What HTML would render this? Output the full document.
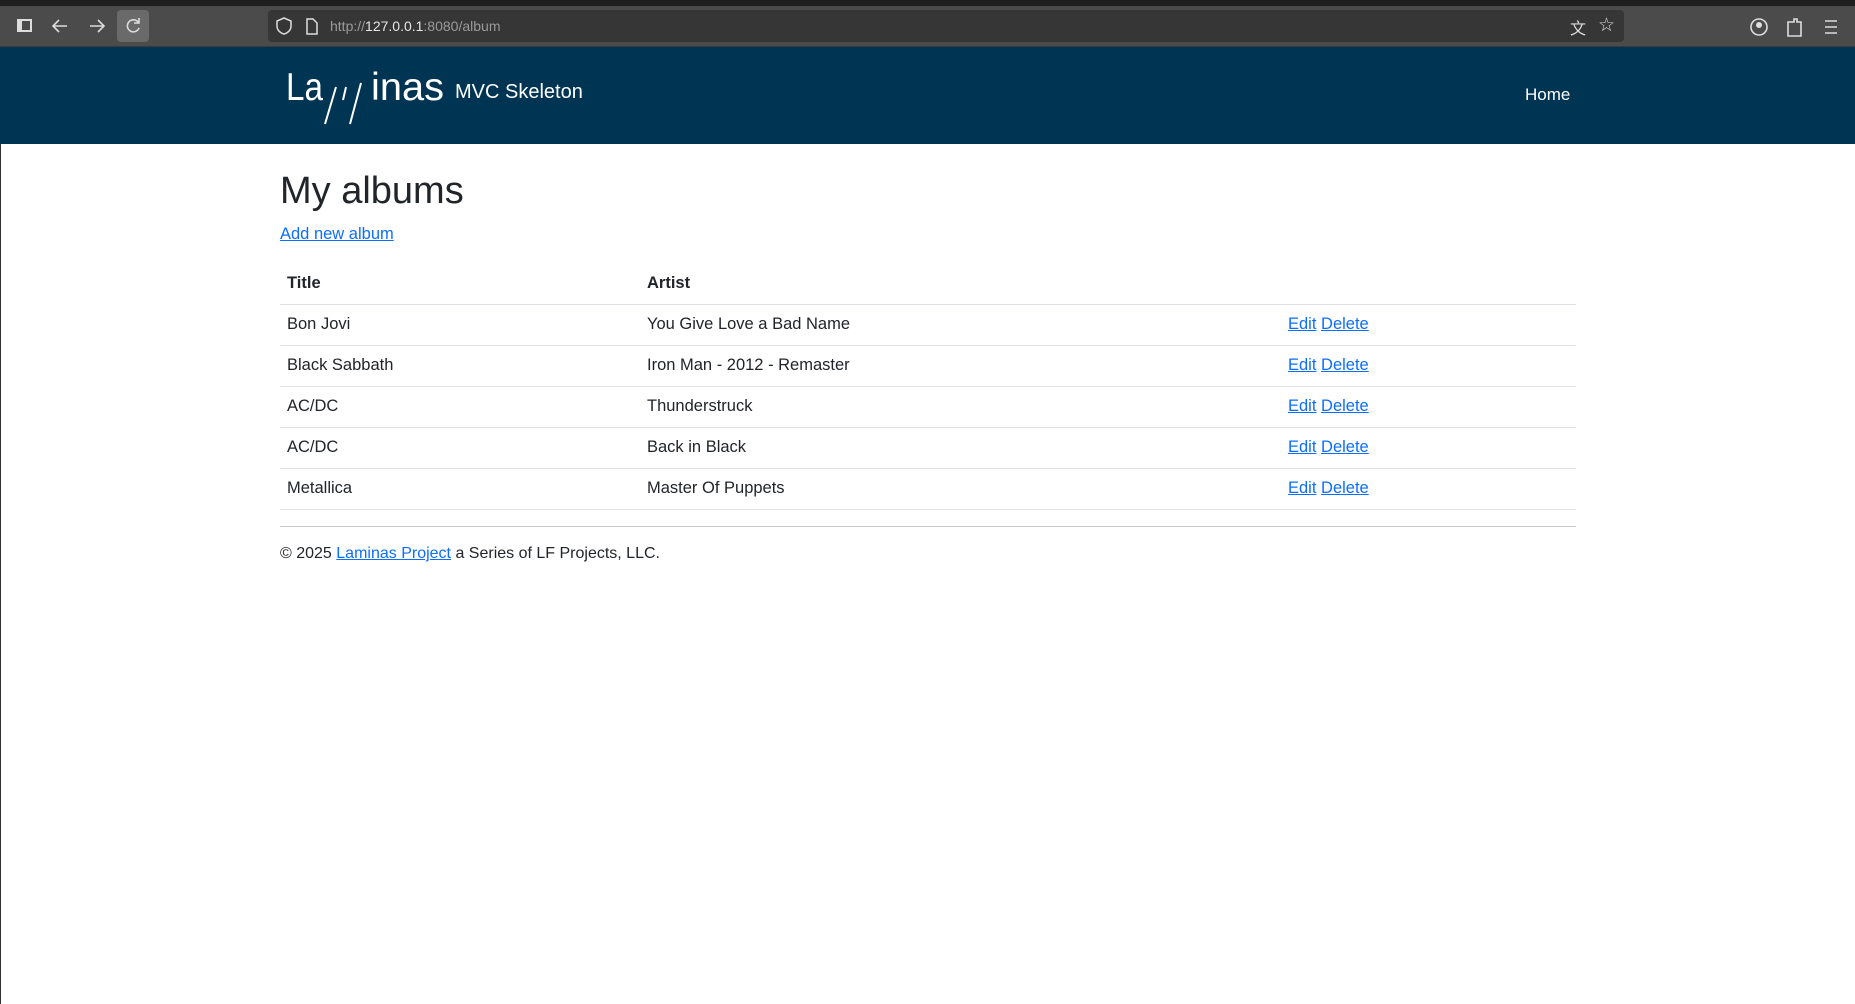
<!DOCTYPE html>
<html><head><meta charset="utf-8"><style>
*{margin:0;padding:0;box-sizing:border-box}
body{width:1855px;height:1004px;background:#fff;font-family:"Liberation Sans","DejaVu Sans",sans-serif;position:relative;overflow:hidden;color:#212529}
.tabs{position:absolute;left:0;top:0;width:1855px;height:8px;background:#1f1f1f}
.bar{position:absolute;left:0;top:6px;width:1855px;height:41px;background:#4b4b4b;border-bottom:1px solid #3a3a3a}
.url{position:absolute;left:268px;top:4px;width:1356px;height:32px;background:#363636;border-radius:4px}
.ic{position:absolute;color:#ddd;font-size:16px}
.hdr{position:absolute;left:0;top:47px;width:1855px;height:97px;background:#003453}
.lb{position:absolute;left:0;top:144px;width:1px;height:860px;background:#333}
.ab{position:absolute;font-size:16.5px;white-space:nowrap}
a{color:#0d6efd;text-decoration:underline}
.line{position:absolute;left:280px;width:1296px;height:1px;background:#dee2e6}
</style></head><body>
<div class="tabs"></div>
<div class="bar">
 <svg style="position:absolute;left:0;top:0" width="160" height="41" viewBox="0 0 160 41">
  <rect x="18" y="14" width="13" height="11" fill="none" stroke="#ddd" stroke-width="2"/><rect x="18" y="14" width="4" height="11" fill="#ddd"/>
  <path d="M67 20H54M59 14l-6 6 6 6" fill="none" stroke="#ddd" stroke-width="1.6"/>
  <path d="M90 20h13M98 14l6 6-6 6" fill="none" stroke="#ddd" stroke-width="1.6"/>
  <rect x="117" y="4" width="32" height="32" rx="4" fill="#6a6a6a"/>
  <path d="M138 16a6 6 0 1 0 1 6M139 12v5h-5" fill="none" stroke="#ddd" stroke-width="1.6"/>
 </svg>
 <div class="url"></div>
 <div style="position:absolute;left:330px;top:4px;line-height:32px;font-size:14px;color:#9a9a9a">http://<span style="color:#e6e6e6">127.0.0.1</span>:8080/album</div>
 <svg style="position:absolute;left:274px;top:10px" width="50" height="20"><path d="M10 2l7 3v5c0 4-3 7-7 8-4-1-7-4-7-8V5z" fill="none" stroke="#ddd" stroke-width="1.5"/><path d="M33 3h6l4 4v11H33z" fill="none" stroke="#ddd" stroke-width="1.5"/></svg>
 <div class="ic" style="left:1570px;top:9px">文</div>
 <div class="ic" style="left:1598px;top:8px;font-size:19px">☆</div>
 <svg style="position:absolute;left:1748px;top:10px" width="100" height="22"><circle cx="11" cy="11" r="8" fill="none" stroke="#ddd" stroke-width="1.6"/><circle cx="11" cy="9" r="3" fill="#ddd"/><path d="M40 6h6v-3h3v3h4v14H40z" fill="none" stroke="#ddd" stroke-width="1.6"/><path d="M77 5h12M77 11h12M77 17h12" stroke="#ddd" stroke-width="1.6"/></svg>
</div>
<div class="hdr">
 <svg style="position:absolute;left:280px;top:0" width="200" height="97" viewBox="0 0 200 97">
  <text x="6" y="53" font-size="39" fill="#fff" font-family="Liberation Sans,sans-serif" textLength="37" lengthAdjust="spacingAndGlyphs">La</text>
  <path d="M45 77L56 40M63 53L66 40M70 77L81 36" stroke="#fff" stroke-width="2"/>
  <text x="91" y="53" font-size="39" fill="#fff" font-family="Liberation Sans,sans-serif" textLength="73" lengthAdjust="spacingAndGlyphs">inas</text>
 </svg>
 <div style="position:absolute;left:455px;top:34px;font-size:20px;color:#fff">MVC Skeleton</div>
 <div style="position:absolute;left:1525px;top:38px;font-size:17px;color:#fff">Home</div>
</div>
<div class="lb"></div>
<div class="ab" style="left:280px;top:170px;font-size:38px;font-weight:500">My albums</div>
<div class="ab" style="left:280px;top:225px"><a>Add new album</a></div>
<div class="ab" style="left:287px;top:274px;font-weight:bold">Title</div>
<div class="ab" style="left:647px;top:274px;font-weight:bold">Artist</div>
<div class="line" style="top:304px"></div>
<div class="line" style="top:345px"></div>
<div class="line" style="top:386px"></div>
<div class="line" style="top:427px"></div>
<div class="line" style="top:468px"></div>
<div class="line" style="top:509px"></div>
<div class="line" style="top:526px;background:#c8c8c8"></div>

<div class="ab" style="left:287px;top:315px">Bon Jovi</div><div class="ab" style="left:647px;top:315px">You Give Love a Bad Name</div><div class="ab" style="left:1288px;top:315px"><a>Edit</a> <a>Delete</a></div>
<div class="ab" style="left:287px;top:356px">Black Sabbath</div><div class="ab" style="left:647px;top:356px">Iron Man - 2012 - Remaster</div><div class="ab" style="left:1288px;top:356px"><a>Edit</a> <a>Delete</a></div>
<div class="ab" style="left:287px;top:397px">AC/DC</div><div class="ab" style="left:647px;top:397px">Thunderstruck</div><div class="ab" style="left:1288px;top:397px"><a>Edit</a> <a>Delete</a></div>
<div class="ab" style="left:287px;top:438px">AC/DC</div><div class="ab" style="left:647px;top:438px">Back in Black</div><div class="ab" style="left:1288px;top:438px"><a>Edit</a> <a>Delete</a></div>
<div class="ab" style="left:287px;top:479px">Metallica</div><div class="ab" style="left:647px;top:479px">Master Of Puppets</div><div class="ab" style="left:1288px;top:479px"><a>Edit</a> <a>Delete</a></div>

<div class="ab" style="left:280px;top:545px;font-size:16px">© 2025 <a>Laminas Project</a> a Series of LF Projects, LLC.</div>
</body></html>
